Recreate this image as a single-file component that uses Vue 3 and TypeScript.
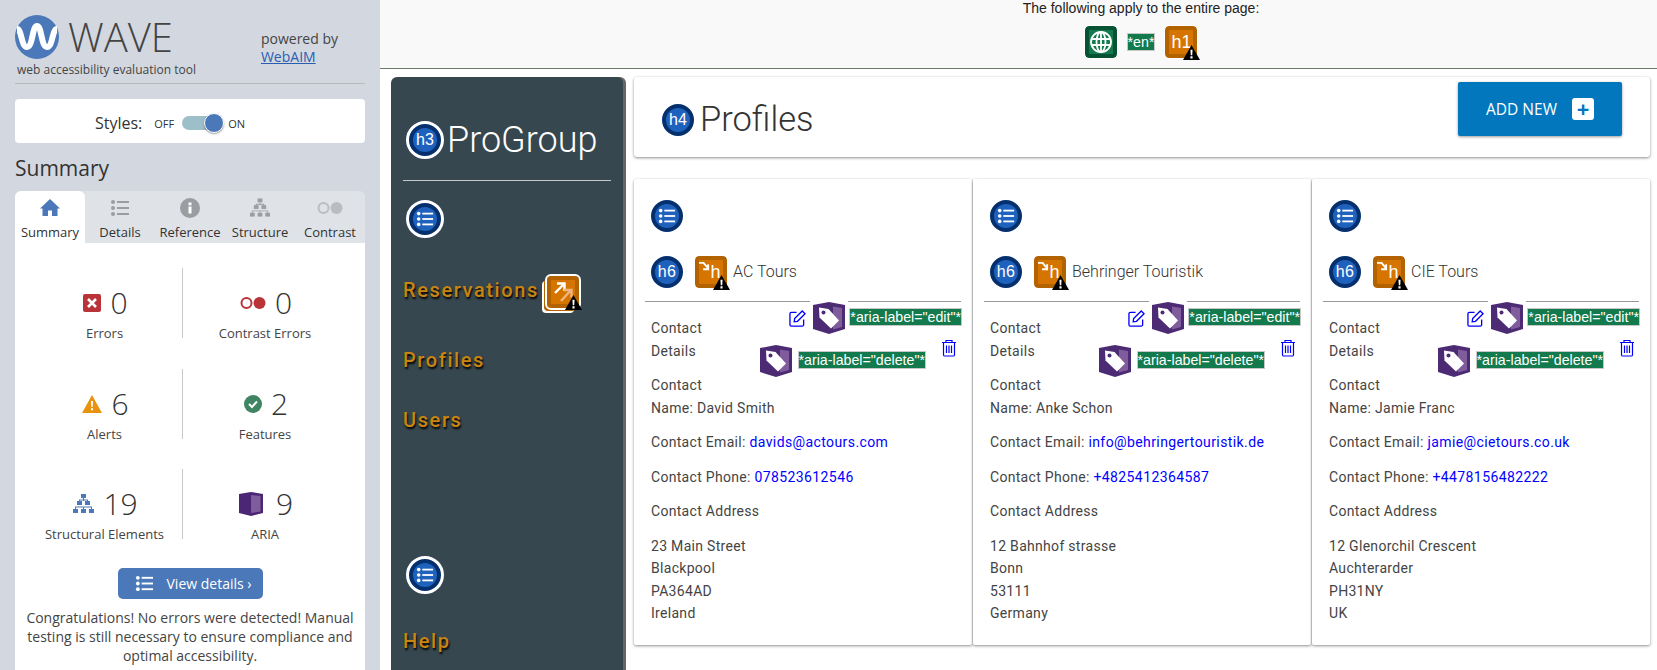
<template>
  <div class="page">
    <svg class="defs" width="0" height="0" aria-hidden="true">
      <symbol id="warn" viewBox="0 0 16 14">
        <path d="M8 0 16 14H0z" fill="#000" />
        <path d="M7 4.500h2L8.700 9.600H7.300zM7 10.600h2v2H7z" fill="#fff" />
      </symbol>
      <symbol id="lines" viewBox="0 0 20 20">
        <g fill="currentColor">
          <circle cx="3" cy="4" r="2" />
          <circle cx="3" cy="10" r="2" />
          <circle cx="3" cy="16" r="2" />
          <rect x="7" y="3" width="12" height="2" />
          <rect x="7" y="9" width="12" height="2" />
          <rect x="7" y="15" width="12" height="2" />
        </g>
      </symbol>
      <symbol id="tag" viewBox="0 0 32 32">
        <path d="M16 0 32 3V27L16 32 0 27V3z" fill="#4d2a74" />
        <path d="M20 4.500 29 6V25L20 27.500z" fill="#7f5c9c" />
        <path d="M6 5.500 15.500 7 26 18.500 18 26.500 6.500 15.500z" fill="#fff" />
        <circle cx="10.500" cy="10.500" r="2" fill="#4d2a74" />
      </symbol>
      <symbol id="tree" viewBox="0 0 21 20">
        <g fill="currentColor">
          <rect x="8" y="0" width="5" height="4" />
          <rect x="4" y="7" width="5" height="4" />
          <rect x="12" y="7" width="5" height="4" />
          <rect x="0" y="15" width="5" height="4" />
          <rect x="8" y="15" width="5" height="4" />
          <rect x="16" y="15" width="5" height="4" />
          <path d="M10 4h1v3h-1zM6 5.500h9v1.500h-1v-.500H7V7H6zM2 12.500h17V15h-1v-1.500h-7V15h-1v-1.500H3V15H2z" />
        </g>
      </symbol>
    </svg>

    <aside class="wave">
      <div class="wave-head">
        <div class="wave-brand">
          <div class="wave-logo-row">
            <svg class="wave-logo" viewBox="0 0 44 44">
              <circle cx="22" cy="22" r="22" fill="#4a78b8" />
              <path d="M2 14c5 0 4 18 10 18s5-21 10-21 4 21 10 21 5-18 10-18" fill="none" stroke="#fff" stroke-width="6" />
            </svg>
            <span class="wave-name">WAVE</span>
          </div>
          <div class="wave-tagline">web accessibility evaluation tool</div>
        </div>
        <div class="wave-powered">powered by<br /><a href="#">WebAIM</a></div>
      </div>

      <div class="styles-box">
        <span class="styles-label">Styles:</span>
        <span class="styles-state">OFF</span>
        <span class="toggle"><span class="knob"></span></span>
        <span class="styles-state">ON</span>
      </div>

      <h2 class="summary-title">Summary</h2>

      <div class="tabs">
        <div v-for="(tab, i) in tabs" :key="tab" class="tab" :class="{ active: i === 0 }">
          <svg v-if="i === 0" class="tab-icon" viewBox="0 0 20 20">
            <path d="M10 1 20 10.500H17.500V18H12V12.500H8V18H2.500V10.500H0z" fill="#4a78b8" />
          </svg>
          <svg v-else-if="i === 1" class="tab-icon lines-grey"><use href="#lines" /></svg>
          <svg v-else-if="i === 2" class="tab-icon" viewBox="0 0 20 20">
            <circle cx="10" cy="10" r="10" fill="#9a9da1" />
            <rect x="8.500" y="8.500" width="3" height="7" fill="#fff" />
            <rect x="8.500" y="4.500" width="3" height="2.800" fill="#fff" />
          </svg>
          <svg v-else-if="i === 3" class="tab-icon lines-grey"><use href="#tree" /></svg>
          <svg v-else class="tab-icon wide" viewBox="0 0 26 14">
            <circle cx="6.500" cy="7" r="5" fill="none" stroke="#b9bcc0" stroke-width="2" />
            <circle cx="19.500" cy="7" r="6" fill="#b9bcc0" />
          </svg>
          <span>{{ tab }}</span>
        </div>
      </div>

      <div class="summary-body">
        <div class="stats">
          <div v-for="(stat, i) in stats" :key="stat.label" class="stat" :class="{ ruled: i % 2 === 0 }">
            <div class="stat-top">
              <svg v-if="stat.icon === 'error'" class="stat-icon" viewBox="0 0 18 18">
                <rect width="18" height="18" rx="2" fill="#b93338" />
                <path d="M5 5 13 13M13 5 5 13" stroke="#fff" stroke-width="2.600" />
              </svg>
              <svg v-else-if="stat.icon === 'contrast'" class="stat-icon wide" viewBox="0 0 26 14">
                <circle cx="6.500" cy="7" r="5" fill="none" stroke="#b93338" stroke-width="2" />
                <circle cx="19.500" cy="7" r="6" fill="#b93338" />
              </svg>
              <svg v-else-if="stat.icon === 'alert'" class="stat-icon alert" viewBox="0 0 20 18">
                <path d="M10 0 20 18H0z" fill="#e8920f" />
                <path d="M9 6h2l-.3 6H9.300zM9 13.200h2v2H9z" fill="#fff" />
              </svg>
              <svg v-else-if="stat.icon === 'feature'" class="stat-icon" viewBox="0 0 18 18">
                <circle cx="9" cy="9" r="9" fill="#3f8463" />
                <path d="M5 9 8 12 13 6.500" fill="none" stroke="#fff" stroke-width="2" />
              </svg>
              <svg v-else-if="stat.icon === 'tree'" class="stat-icon tree-blue"><use href="#tree" /></svg>
              <svg v-else class="stat-icon aria" viewBox="0 0 24 24">
                <path d="M12 0 24 2V21L12 24 0 21V2z" fill="#4a2674" />
                <path d="M12 3 21.500 4V19.500L12 21z" fill="#7f5c9c" />
              </svg>
              <span class="stat-num">{{ stat.value }}</span>
            </div>
            <div class="stat-label">{{ stat.label }}</div>
          </div>
        </div>
        <button class="details-btn" type="button">
          <svg class="details-icon"><use href="#lines" /></svg>
          <span>View details ›</span>
        </button>
        <p class="congrats">
          Congratulations! No errors were detected! Manual testing is still necessary to ensure compliance and optimal
          accessibility.
        </p>
      </div>
    </aside>

    <div class="site">
      <div class="page-bar">
        <div class="page-bar-text">The following apply to the entire page:</div>
        <div class="page-bar-icons">
          <span class="ic ic-green">
            <svg viewBox="0 0 24 24" class="globe">
              <g fill="none" stroke="#fff" stroke-width="1.800">
                <circle cx="12" cy="12" r="10" />
                <ellipse cx="12" cy="12" rx="4.500" ry="10" />
                <path d="M12 2V22M2.500 9H21.500M2.500 15H21.500" />
              </g>
            </svg>
          </span>
          <span class="label">*en*</span>
          <span class="ic ic-orange">h1<svg class="warn"><use href="#warn" /></svg></span>
        </div>
      </div>

      <div class="site-body">
        <nav class="nav">
          <div class="nav-brand"><span class="badge ringed">h3</span><span>ProGroup</span></div>
          <hr class="nav-rule" />
          <span class="badge ringed list-badge"><svg class="badge-lines"><use href="#lines" /></svg></span>
          <a class="nav-link first" href="#">
            Reservations
            <span class="ic ic-orange ic-link">
              <svg viewBox="0 0 24 24" class="link-arrows">
                <path d="M4 13 13 4M6 3.500H13.500V11" fill="none" stroke="#fff" stroke-width="2.400" />
                <path d="M10 21 20 10M13 10H20.500V17.500" fill="none" stroke="#f0b57f" stroke-width="2.400" />
              </svg>
              <svg class="warn"><use href="#warn" /></svg>
            </span>
          </a>
          <a class="nav-link profiles" href="#">Profiles</a>
          <a class="nav-link" href="#">Users</a>
          <span class="badge ringed list-badge bottom"><svg class="badge-lines"><use href="#lines" /></svg></span>
          <a class="nav-link help" href="#">Help</a>
        </nav>

        <main class="main">
          <header class="title-card">
            <h1 class="title"><span class="badge">h4</span>Profiles</h1>
            <button class="add-btn" type="button">
              ADD NEW
              <span class="add-plus">+</span>
            </button>
          </header>

          <section class="cards">
            <article v-for="p in profiles" :key="p.name" class="card">
              <span class="badge"><svg class="badge-lines"><use href="#lines" /></svg></span>
              <div class="card-name">
                <span class="badge">h6</span>
                <span class="ic ic-orange ic-skip">
                  <svg viewBox="0 0 12 12" class="skip-arrow">
                    <path d="M0 2H5L10 8M10 3.500V9H4.500" fill="none" stroke="#fff" stroke-width="2" />
                  </svg>
                  h
                  <svg class="warn"><use href="#warn" /></svg>
                </span>
                <span class="name-text">{{ p.name }}</span>
              </div>
              <div class="card-rule"></div>
              <div class="detail-head">
                <div class="detail-title">Contact Details</div>
                <div class="actions">
                  <div class="action-row first-row">
                    <svg class="edit" viewBox="0 0 18 18">
                      <path d="M8 2.500H2.500A1.500 1.500 0 0 0 1 4V15.500A1.500 1.500 0 0 0 2.500 17H14A1.500 1.500 0 0 0 15.500 15.500V10" fill="none" stroke="#00f" stroke-width="1.400" />
                      <path d="M6 9 14 1l3 3-8 8-3.500.500z" fill="none" stroke="#00f" stroke-width="1.400" />
                    </svg>
                    <svg class="tag tag-top"><use href="#tag" /></svg>
                    <span class="label">*aria-label="edit"*</span>
                  </div>
                  <div class="action-row second">
                    <svg class="tag"><use href="#tag" /></svg>
                    <span class="label">*aria-label="delete"*</span>
                    <svg class="trash" viewBox="0 0 16 18">
                      <path d="M1 3.500H15M5 3.500V1.500H11V3.500M2.500 3.500V16A1.200 1.200 0 0 0 3.700 17H12.300A1.200 1.200 0 0 0 13.500 16V3.500M5.500 6.500V14M8 6.500V14M10.500 6.500V14" fill="none" stroke="#00f" stroke-width="1.200" />
                    </svg>
                  </div>
                </div>
              </div>
              <p class="contact-name">Contact<br />Name: {{ p.contact }}</p>
              <p>Contact Email: <a href="#">{{ p.email }}</a></p>
              <p>Contact Phone: <a href="#">{{ p.phone }}</a></p>
              <p>Contact Address</p>
              <p class="address"><span v-for="l in p.address" :key="l">{{ l }}</span></p>
            </article>
          </section>
        </main>
      </div>
    </div>
  </div>
</template>

<script setup lang="ts">
interface Stat {
  icon: string;
  value: number;
  label: string;
}

interface Profile {
  name: string;
  contact: string;
  email: string;
  phone: string;
  address: string[];
}

const tabs = ["Summary", "Details", "Reference", "Structure", "Contrast"];

const stats: Stat[] = [
  { icon: "error", value: 0, label: "Errors" },
  { icon: "contrast", value: 0, label: "Contrast Errors" },
  { icon: "alert", value: 6, label: "Alerts" },
  { icon: "feature", value: 2, label: "Features" },
  { icon: "tree", value: 19, label: "Structural Elements" },
  { icon: "aria", value: 9, label: "ARIA" },
];

const profiles: Profile[] = [
  {
    name: "AC Tours",
    contact: "David Smith",
    email: "davids@actours.com",
    phone: "078523612546",
    address: ["23 Main Street", "Blackpool", "PA364AD", "Ireland"],
  },
  {
    name: "Behringer Touristik",
    contact: "Anke Schon",
    email: "info@behringertouristik.de",
    phone: "+4825412364587",
    address: ["12 Bahnhof strasse", "Bonn", "53111", "Germany"],
  },
  {
    name: "CIE Tours",
    contact: "Jamie Franc",
    email: "jamie@cietours.co.uk",
    phone: "+4478156482222",
    address: ["12 Glenorchil Crescent", "Auchterarder", "PH31NY", "UK"],
  },
];
</script>

<style>
html,
body {
  margin: 0;
  height: 100%;
  overflow: hidden;
  background: #fff;
}
</style>

<style scoped>
.page {
  display: grid;
  grid-template-columns: 380px 1fr;
  height: 670px;
  overflow: hidden;
  font-family: Roboto, sans-serif;
}

.defs {
  position: absolute;
}

/* wave sidebar */
.wave {
  background: #d3d8e0;
  padding: 15px 15px 0;
  font-family: "Open Sans", sans-serif;
  color: #333;
  overflow: hidden;
}

.wave-head {
  display: flex;
  justify-content: space-between;
  height: 68px;
  border-bottom: 1px solid #b6babd;
}

.wave-logo-row {
  display: flex;
  align-items: center;
  gap: 9px;
  height: 44px;
}

.wave-logo {
  width: 44px;
  height: 44px;
}

.wave-name {
  font-size: 40px;
  font-weight: 300;
  color: #444;
  line-height: 44px;
}

.wave-tagline {
  font-size: 12px;
  line-height: 16px;
  margin: 3px 0 0 2px;
  color: #444;
}

.wave-powered {
  font-size: 14px;
  line-height: 18px;
  color: #444;
  padding: 15px 27px 0 0;
}

.wave-powered a {
  color: #2a5db0;
}

.styles-box {
  display: flex;
  align-items: center;
  justify-content: center;
  height: 44px;
  box-sizing: border-box;
  margin-top: 15px;
  background: #fff;
  border-radius: 4px;
  padding: 4px 40px 0 0;
  font-size: 16px;
}

.styles-label {
  margin-right: 12px;
}

.styles-state {
  font-size: 11px;
}

.toggle {
  position: relative;
  width: 35px;
  height: 14px;
  margin: 0 11px 0 8px;
  border-radius: 7px;
  background: #9dbfca;
}

.knob {
  position: absolute;
  top: -3px;
  right: -7px;
  width: 20px;
  height: 20px;
  box-sizing: border-box;
  border: 1px solid #fff;
  border-radius: 50%;
  background: #4a78b8;
  box-shadow: 0 1px 2px rgba(0, 0, 0, 0.4);
}

.summary-title {
  margin: 7px 0 0;
  font-size: 21px;
  font-weight: 400;
  line-height: 37px;
}

.tabs {
  display: grid;
  grid-template-columns: repeat(5, 70px);
  height: 52px;
  margin-top: 4px;
  background: #dfe3e8;
  border-radius: 6px 6px 0 0;
}

.tab {
  display: flex;
  flex-direction: column;
  align-items: center;
  font-size: 13px;
  white-space: nowrap;
  padding-top: 7px;
  box-sizing: border-box;
  line-height: 17px;
}

.tab.active {
  background: #fff;
  border-radius: 6px 6px 0 0;
}

.tab-icon {
  width: 20px;
  height: 20px;
  margin-bottom: 6px;
}

.tab-icon.wide {
  width: 26px;
}

.lines-grey {
  color: #9a9da1;
}

.summary-body {
  background: #fff;
  height: 430px;
  text-align: center;
}

.stats {
  display: grid;
  grid-template-columns: 156px 164px;
  row-gap: 30.500px;
  padding: 25px 0 0 12px;
}

.stat {
  height: 70px;
  text-align: center;
  box-sizing: border-box;
  padding-top: 23px;
}

.stat.ruled {
  border-right: 1px solid #c8c8c8;
}

.stat-top {
  display: flex;
  align-items: center;
  justify-content: center;
  gap: 9px;
  height: 24px;
  padding-left: 2px;
}

.stat-icon {
  width: 18px;
  height: 18px;
}

.stat-icon.wide {
  width: 26px;
  height: 14px;
}

.stat-icon.alert {
  width: 20px;
}

.stat-icon.tree-blue {
  width: 21px;
  height: 20px;
  color: #4a78b8;
}

.stat-icon.aria {
  width: 24px;
  height: 24px;
  margin-right: 4px;
}

.stat-num {
  font-size: 30px;
  font-weight: 300;
  line-height: 24px;
  color: #333;
}

.stat-label {
  margin-top: 10px;
  font-size: 13px;
  line-height: 17px;
  color: #444;
}

.details-btn {
  display: inline-flex;
  align-items: center;
  height: 31px;
  width: 145px;
  margin-top: 29px;
  padding: 0 0 0 17px;
  border: 0;
  border-radius: 5px;
  background: #4a78b8;
  color: #fff;
  font-family: "Open Sans", sans-serif;
  font-size: 14px;
  gap: 13px;
  white-space: nowrap;
}

.details-icon {
  width: 19px;
  height: 19px;
  color: #fff;
}

.congrats {
  margin: 9px 0 0;
  padding: 0 6px;
  font-size: 14px;
  line-height: 19px;
  color: #444;
}

/* site under test */
.site {
  display: flex;
  flex-direction: column;
  min-width: 0;
}

.page-bar {
  height: 68px;
  background: #f9f9f9;
  border-bottom: 1px solid #6f786c;
  padding-left: 245px;
  text-align: center;
  font-family: "Liberation Sans", sans-serif;
  font-size: 14px;
  color: #222;
}

.page-bar-text {
  line-height: 16px;
}

.page-bar-icons {
  display: flex;
  justify-content: center;
  align-items: center;
  gap: 10px;
  margin-top: 10px;
}

.site-body {
  display: flex;
  padding: 8px 7px 0 11px;
  gap: 11px;
}

.badge {
  display: inline-flex;
  align-items: center;
  justify-content: center;
  flex: none;
  box-sizing: border-box;
  width: 32px;
  height: 32px;
  border: 4px solid #04306e;
  border-radius: 50%;
  background: #1f62bd;
  color: #fff;
  font-family: "Liberation Sans", sans-serif;
  font-size: 16px;
  font-weight: 400;
}

.badge.ringed {
  width: 38px;
  height: 38px;
  outline: 3px solid #fff;
  outline-offset: -3px;
  border-width: 7px;
}

.badge-lines {
  width: 18px;
  height: 18px;
  color: #fff;
}

.ic {
  position: relative;
  display: inline-flex;
  align-items: center;
  justify-content: center;
  box-sizing: border-box;
  width: 32px;
  height: 32px;
  border-radius: 4px;
  font-family: "Liberation Sans", sans-serif;
  font-size: 18px;
  font-weight: 400;
  color: #fff;
  text-shadow: none;
  letter-spacing: 0;
}

.ic-green {
  background: #137a4d;
  border: 4px solid #065333;
  outline: 1px solid #fff;
}

.globe {
  width: 24px;
  height: 24px;
}

.ic-orange {
  background: #d57500;
  border: 4px solid #b36200;
  outline: 1px solid #fff;
}

.warn {
  position: absolute;
  right: -7px;
  bottom: -6px;
  width: 17px;
  height: 15px;
}

.label {
  display: inline-block;
  background: #137a4d;
  border: 1px solid #c8c8c8;
  color: #fff;
  font-family: "Liberation Sans", sans-serif;
  font-size: 14.200px;
  line-height: 16px;
  white-space: nowrap;
  letter-spacing: 0;
}

/* nav */
.nav {
  display: flex;
  flex-direction: column;
  align-items: flex-start;
  width: 232px;
  height: 600px;
  box-sizing: border-box;
  flex: none;
  padding: 44px 12px 0;
  background: #37474f;
  border-radius: 6px 6px 0 0;
  box-shadow: 3px 0 0 #666;
}

.nav-brand {
  display: flex;
  align-items: center;
  gap: 3px;
  margin-left: 3px;
  color: #fff;
  font-size: 36px;
  font-weight: 300;
  line-height: 38px;
}

.nav-rule {
  width: 208px;
  margin: 21px 0 19px;
  border: 0;
  border-top: 1px solid #c4c8ca;
}

.list-badge {
  margin-left: 3px;
}

.nav-link {
  display: flex;
  align-items: center;
  height: 40px;
  margin-top: 20px;
  color: #c98510;
  font-size: 20px;
  font-weight: 500;
  letter-spacing: 1.600px;
  text-decoration: none;
  text-shadow: 1px 2px 2px #000;
  white-space: nowrap;
}

.nav-link.first {
  margin-top: 32px;
}

.nav-link.profiles {
  margin-top: 30px;
}

.ic-link {
  margin-left: 8px;
  margin-top: 3px;
  outline-width: 2px;
  box-shadow: -3px 3px 0 #b36200, -5px 5px 0 #fff;
}

.link-arrows {
  width: 24px;
  height: 24px;
}

.list-badge.bottom {
  margin-top: 116px;
}

.nav-link.help {
  margin-top: 27px;
}

/* main column */
.main {
  flex: 1;
  min-width: 0;
}

.title-card {
  display: flex;
  align-items: center;
  justify-content: space-between;
  height: 80px;
  padding: 0 28px;
  background: #fff;
  border-radius: 3px;
  box-shadow: 0 1px 3px rgba(0, 0, 0, 0.45);
}

.title {
  display: flex;
  align-items: center;
  gap: 6px;
  margin: 3px 0 0;
  color: #333;
  font-size: 34.500px;
  font-weight: 300;
}

.title .badge {
  margin-top: 3px;
}

.add-btn {
  display: flex;
  align-items: center;
  justify-content: center;
  align-self: flex-start;
  gap: 15px;
  width: 164px;
  height: 54px;
  margin-top: 5px;
  border: 0;
  border-radius: 2px;
  background: #0277bd;
  color: #fff;
  font-family: "Open Sans", sans-serif;
  font-size: 15.500px;
  box-shadow: 0 1px 3px rgba(0, 0, 0, 0.4);
}

.add-plus {
  width: 22px;
  height: 22px;
  border-radius: 3px;
  background: #fff;
  color: #0277bd;
  font-size: 22px;
  font-weight: 700;
  line-height: 21px;
}

.cards {
  display: grid;
  grid-template-columns: repeat(3, 1fr);
  gap: 1px;
  margin-top: 22px;
}

.card {
  height: 466px;
  box-sizing: border-box;
  padding: 21px 11px 0 17px;
  background: #fff;
  border-radius: 2px;
  box-shadow: 0 1px 3px rgba(0, 0, 0, 0.45);
  font-size: 14px;
  letter-spacing: 0.300px;
  color: #444;
  line-height: 22.500px;
}

.card p {
  margin: 12px 0 0;
}

.card a {
  color: #00f;
  text-decoration: none;
  letter-spacing: 0.400px;
}

.card-name {
  display: flex;
  align-items: center;
  margin-top: 24px;
}

.ic-skip {
  margin-left: 12px;
  padding: 0 0 0 9px;
}

.skip-arrow {
  position: absolute;
  left: 0;
  top: 1px;
  width: 11px;
  height: 11px;
}

.name-text {
  margin-left: 6px;
  font-size: 16px;
  font-weight: 300;
  letter-spacing: 0;
  color: #333;
}

.card-rule {
  margin: 13px 0 0 -6px;
  border-top: 1px solid #999;
}

.detail-head {
  display: flex;
  justify-content: space-between;
  margin-right: -1px;
}

.detail-title {
  width: 62px;
  margin-top: 15px;
  flex: none;
}

.actions {
  display: flex;
  flex-direction: column;
  align-items: flex-end;
  flex: 1;
}

.action-row {
  display: flex;
  align-items: center;
  gap: 6px;
  height: 32px;
}

.action-row.first-row {
  gap: 4px;
}

.action-row.first-row .label {
  margin-top: -2px;
}

.action-row.second {
  margin-top: 11px;
}

.action-row.second .label {
  margin-top: -2px;
}

.edit {
  width: 17px;
  height: 17px;
  margin-right: 3px;
}

.tag {
  width: 32px;
  height: 32px;
  flex: none;
}

.tag-top {
  margin-top: -1px;
  background: #fff;
  box-shadow: 0 0 0 3px #fff;
}

.trash {
  width: 16px;
  height: 18px;
  margin: -26px 5px 0 9px;
}

.card .contact-name {
  margin-top: -3px;
}

.address span {
  display: block;
}
</style>
